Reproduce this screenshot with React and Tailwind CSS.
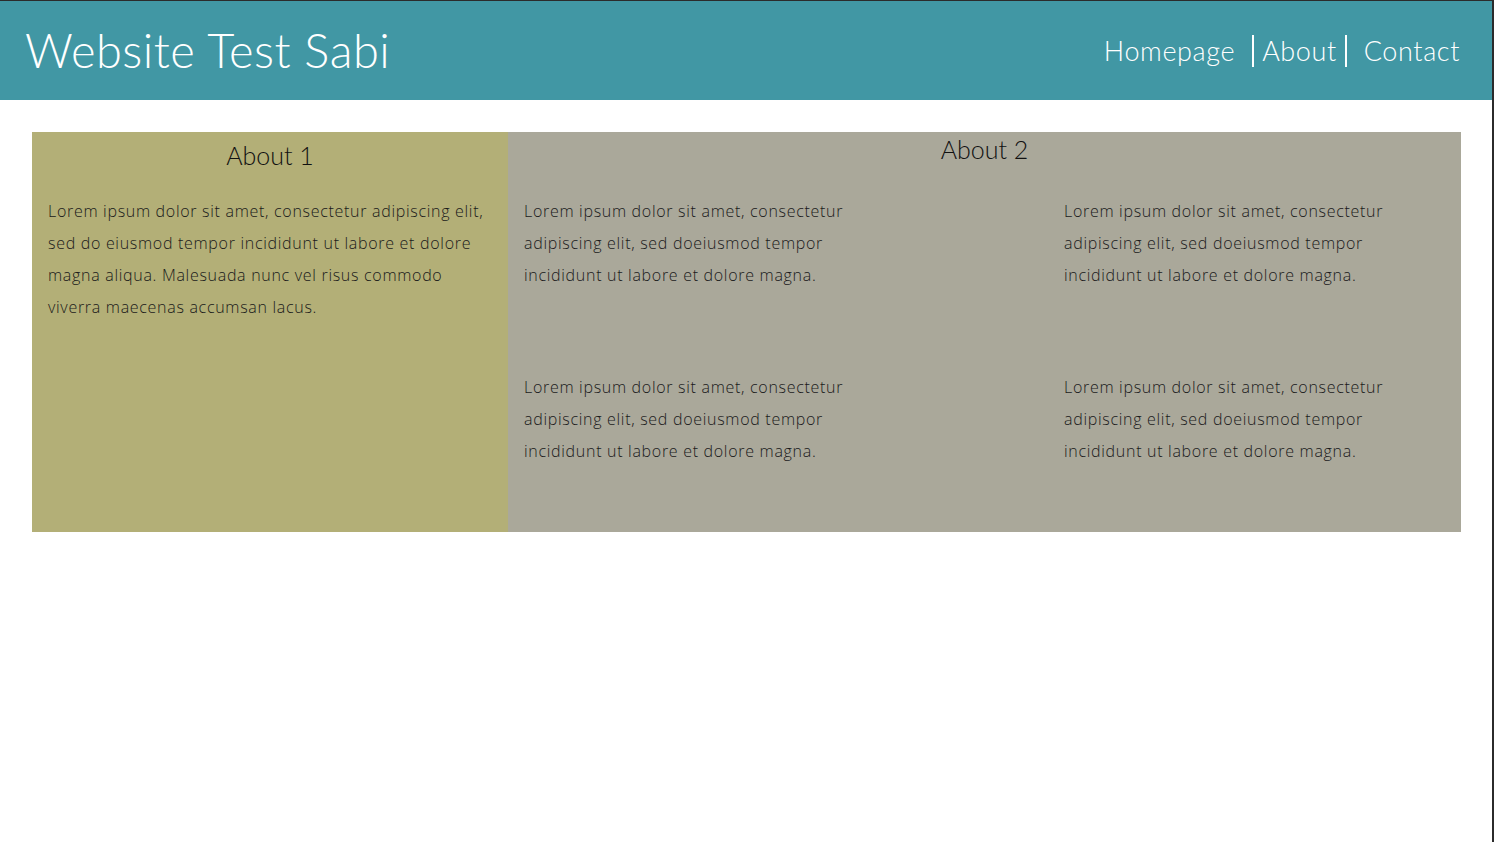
import React from 'react';

const lorem = ['Lorem ipsum dolor sit amet, consectetur', 'adipiscing elit, sed doeiusmod tempor', 'incididunt ut labore et dolore magna.'];

const bodyFont = { fontFamily: '"Open Sans", Lato, sans-serif' };

function Para({ lines }) {
  return (
    <p className="text-[16px] leading-[32px] tracking-[0.7px] text-[#1a1a1a] font-light" style={bodyFont}>
      {lines.map((l, i) => (
        <span key={i} className="block whitespace-nowrap">{l}</span>
      ))}
    </p>
  );
}

export default function App() {
  return (
    <div
      className="min-h-[842px] bg-white border-t border-r-2 border-[#2b2b2b]"
      style={{ fontFamily: 'Lato, "Open Sans", sans-serif' }}
    >
      <header className="h-[99px] bg-[#4197a4] flex items-center justify-between pl-[25px] pr-[32px] text-white font-light">
        <h1 className="text-[47px] leading-none tracking-[0.5px]">Website Test Sabi</h1>
        <nav className="flex items-center gap-[17px] text-[27px] leading-none tracking-[0.6px]">
          <a href="#">Homepage</a>
          <a href="#" className="border-x-2 border-white px-[8px] py-[2px] leading-[28px]">About</a>
          <a href="#">Contact</a>
        </nav>
      </header>

      <main className="pl-[32px] pr-[31px] pt-[32px]">
        <div className="flex h-[400px]">
          <section className="w-[476px] bg-[#b3af77] px-[16px]">
            <h2 className="text-center text-[25px] leading-[36px] pt-[5px] text-[#111] font-light">About 1</h2>
            <p className="mt-[22px] text-[16px] leading-[32px] tracking-[0.7px] text-[#1a1a1a] font-light" style={bodyFont}>
              <span className="block whitespace-nowrap">Lorem ipsum dolor sit amet, consectetur adipiscing elit,</span>
              <span className="block whitespace-nowrap">sed do eiusmod tempor incididunt ut labore et dolore</span>
              <span className="block whitespace-nowrap">magna aliqua. Malesuada nunc vel risus commodo</span>
              <span className="block whitespace-nowrap">viverra maecenas accumsan lacus.</span>
            </p>
          </section>
          <section className="flex-1 bg-[#aaa89a] px-[16px]">
            <h2 className="text-center text-[25px] leading-[36px] -mt-px text-[#111] font-light">About 2</h2>
            <div className="mt-[28px] grid grid-cols-[540px_1fr] gap-y-[80px]">
              <Para lines={lorem} />
              <Para lines={lorem} />
              <Para lines={lorem} />
              <Para lines={lorem} />
            </div>
          </section>
        </div>
      </main>
    </div>
  );
}
